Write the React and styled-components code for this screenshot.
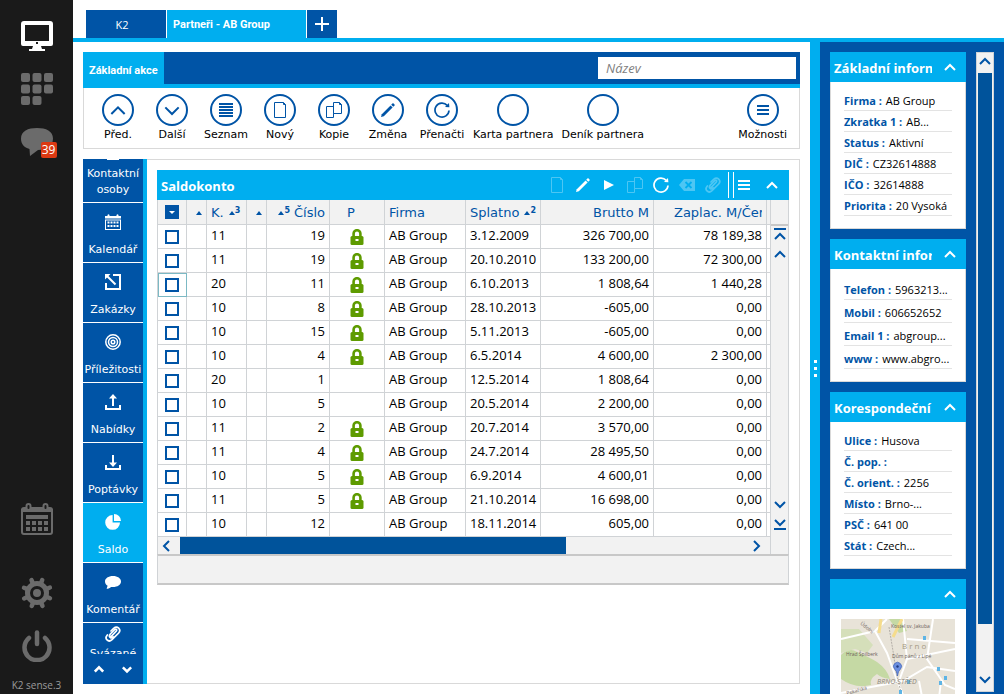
import styled, { createGlobalStyle, css } from 'styled-components';

const blue = '#0054a6';
const cyan = '#00aeef';
const line = '#d0d3d6';
const sans = "'Open Sans', 'Noto Sans', sans-serif";
const wide = "'DejaVu Sans', sans-serif";
const narrow = "Roboto, 'Open Sans', sans-serif";

const GlobalStyle = createGlobalStyle`
  * {
    box-sizing: border-box;
  }

  body {
    margin: 0;
    background: #fff;
    font-family: ${sans};
    font-size: 13px;
    color: #000;
    overflow: hidden;
  }

  button {
    border: 0;
    padding: 0;
    background: none;
    color: inherit;
    font: inherit;
    cursor: pointer;
  }

  svg {
    display: block;
    flex: none;
  }
`;

const Page = styled.div`
  display: flex;
  height: 100vh;
`;

/* ---------- left rail ---------- */

const Rail = styled.nav`
  display: flex;
  flex-direction: column;
  align-items: center;
  flex: none;
  width: 73px;
  padding: 20px 0 1px;
  background: #1a1a1a;
  color: #6b6b6b;
`;

const RailButton = styled.button`
  position: relative;
  height: 32px;
  margin-bottom: ${props => props.$gap || 21}px;
  color: ${props => (props.$active ? '#fff' : 'inherit')};
`;

const Badge = styled.span`
  position: absolute;
  right: -4px;
  bottom: 0;
  width: 16px;
  height: 16px;
  border-radius: 2px;
  background: #dc3912;
  color: #fff;
  font-size: 12px;
  line-height: 16px;
  text-align: center;
`;

const RailSpacer = styled.div`
  flex: 1;
`;

const Version = styled.span`
  color: #9a9a9a;
  font-size: 10px;
  line-height: 16px;
`;

/* ---------- frame ---------- */

const Main = styled.div`
  display: flex;
  flex-direction: column;
  flex: 1;
  min-width: 0;
`;

const Tabs = styled.div`
  display: flex;
  gap: 1px;
  padding: 10px 13px 0;
  border-bottom: 4px solid ${cyan};
`;

const Tab = styled.button`
  display: flex;
  align-items: center;
  justify-content: ${props => (props.$active ? 'flex-start' : 'center')};
  width: ${props => props.$width}px;
  height: 28px;
  padding: ${props => (props.$active ? '0 6px' : props.$closable ? '0 8px 0 0' : '0')};
  background: ${props => (props.$active ? cyan : blue)};
  color: #fff;
  font-family: ${props => (props.$active ? narrow : sans)};
  font-size: 11px;
  font-weight: ${props => (props.$active ? 700 : 400)};
  white-space: nowrap;
`;

const Body = styled.div`
  display: flex;
  flex: 1;
  min-height: 0;
`;

const Work = styled.main`
  display: flex;
  flex-direction: column;
  flex: 1;
  gap: 10px;
  min-width: 0;
  padding: 10px;
`;

const Splitter = styled.div`
  display: flex;
  flex-direction: column;
  align-items: center;
  justify-content: center;
  gap: 4px;
  flex: none;
  width: 10px;
  background: ${cyan};
`;

const Dot = styled.span`
  width: 3px;
  height: 3px;
  background: #fff;
`;

/* ---------- ribbon ---------- */

const Ribbon = styled.section`
  flex: none;
`;

const RibbonHead = styled.div`
  display: flex;
  justify-content: space-between;
  height: 36px;
  background: ${blue};
  border-bottom: 4px solid ${cyan};
`;

const RibbonTab = styled.button`
  height: 36px;
  padding: 0 6px;
  background: ${cyan};
  color: #fff;
  font-family: ${narrow};
  font-size: 11px;
  font-weight: 700;
  white-space: nowrap;
`;

const Search = styled.input`
  width: 198px;
  height: 22px;
  margin: 5px 4px 0 0;
  padding: 0 8px;
  border: 0;
  border-radius: 0;
  background: #fff;
  font-family: ${sans};
  font-size: 13px;
  font-style: italic;

  &::placeholder {
    color: #808080;
    opacity: 1;
  }
`;

const RibbonBody = styled.div`
  display: flex;
  height: 61px;
  padding: 6px 8px 0 7px;
  border: 1px solid #d9d9d9;
  border-top: 0;
`;

const Action = styled.button`
  display: flex;
  flex-direction: column;
  align-items: center;
  min-width: 54px;
  height: 50px;
  padding: 0 4px;
  margin-left: ${props => (props.$last ? 'auto' : '0')};
  font-family: ${wide};
  font-size: 11px;
  line-height: 18px;
  white-space: nowrap;
`;

const Circle = styled.span`
  display: flex;
  align-items: center;
  justify-content: center;
  width: 32px;
  height: 32px;
  border: 2px solid ${blue};
  border-radius: 50%;
  color: ${blue};
`;

/* ---------- content ---------- */

const Content = styled.section`
  display: flex;
  flex: 1;
  min-height: 0;
`;

const SideNav = styled.nav`
  display: flex;
  flex-direction: column;
  flex: none;
  width: 64px;
  border-right: 4px solid ${cyan};
  background: ${blue};
  color: #fff;
`;

const NavList = styled.div`
  flex: 1;
  min-height: 0;
  overflow: hidden;
`;

const NavItem = styled.button`
  display: flex;
  flex-direction: column;
  align-items: center;
  gap: 12px;
  width: 100%;
  height: 60px;
  padding: 11px 0 0;
  border-bottom: 1px solid #fff;
  background: ${props => (props.$active ? cyan : blue)};
  font-family: ${wide};
  font-size: 11px;
  line-height: 16px;
  overflow: hidden;

  ${props => props.$cut && css`
    justify-content: flex-end;
    gap: 6px;
    height: 44px;
    padding: 0 0 4px;
  `}

  ${props => props.$tight && css`
    gap: 4px;
    padding: 3px 0 0;
  `}
`;

const NavFoot = styled.div`
  display: flex;
  align-items: center;
  justify-content: center;
  gap: 18px;
  height: 30px;
`;

const Panel = styled.div`
  flex: 1;
  min-width: 0;
  padding: 10px;
  border: 1px solid #d9d9d9;
  border-left: 0;
`;

const GridHead = styled.div`
  display: flex;
  align-items: center;
  height: 30px;
  padding-left: 4px;
  background: ${cyan};
  color: #fff;
`;

const GridTitle = styled.h2`
  flex: 1;
  margin: 0;
  padding-top: 2px;
  font-size: 13px;
  font-weight: 700;
`;

const GridButton = styled.button`
  display: flex;
  align-items: center;
  justify-content: center;
  width: ${props => props.$width || 26}px;
  height: 30px;
  opacity: ${props => (props.disabled ? 0.3 : 1)};
`;

const Divider = styled.span`
  width: 6px;
  height: 26px;
  margin-left: 2px;
  border: 1px solid #fff;
  border-width: 0 1px;
`;

const GridBox = styled.div`
  display: flex;
  border: 1px solid ${line};
  border-width: 0 1px;
`;

const GridMain = styled.div`
  flex: 1;
  min-width: 0;
`;

const Table = styled.table`
  width: 100%;
  table-layout: fixed;
  border-collapse: separate;
  border-spacing: 0;
`;

const Th = styled.th`
  height: 25px;
  padding: ${props => props.$pad || '2px 4px 0'};
  border: 1px solid ${line};
  border-width: 0 1px 1px 0;
  background: #f2f2f2;
  color: ${blue};
  font-family: ${wide};
  font-size: 13px;
  font-weight: 400;
  line-height: 22px;
  text-align: ${props => props.$align || 'left'};
  white-space: nowrap;
`;

const Clip = styled.div`
  overflow: hidden;
`;

const HeadLabel = styled.span`
  display: flex;
  align-items: center;
  justify-content: ${props => props.$justify || 'flex-start'};
  gap: ${props => props.$gap || 0}px;
`;

const Order = styled.span`
  display: flex;
  align-items: center;
  height: 8px;
  font-weight: 700;
  line-height: 8px;

  small {
    padding-bottom: 5px;
    font-size: 8px;
  }
`;

const Td = styled.td`
  height: 24px;
  padding: 0 4px;
  border: 1px solid ${line};
  border-width: 0 1px 1px 0;
  line-height: 20px;
  text-align: ${props => props.$align || 'left'};
  vertical-align: top;
  white-space: nowrap;
  ${props => props.$focused && css`outline: 1px solid #7cb9c4; outline-offset: -1px;`}

  svg {
    margin: 4px auto 0;
  }
`;

const Check = styled.input`
  appearance: none;
  display: block;
  width: 14px;
  height: 14px;
  margin: 5px auto 0;
  border: 2px solid ${blue};
  background: #fff;
`;

const CheckMenu = styled.button`
  display: flex;
  align-items: center;
  justify-content: center;
  width: 14px;
  height: 14px;
  margin: 0 auto;
  background: ${blue};
  color: #fff;
`;

const HScroll = styled.div`
  display: flex;
  align-items: center;
  height: 17px;
  border-right: 1px solid ${line};
  background: #f2f2f2;
  color: ${blue};
`;

const HThumb = styled.div`
  width: 63%;
  height: 17px;
  background: #00539b;
`;

const HArrow = styled.button`
  display: flex;
  width: 22px;
  padding-left: 2px;
  margin-left: ${props => (props.$end ? 'auto' : '0')};
`;

const VScroll = styled.div`
  display: flex;
  flex-direction: column;
  align-items: center;
  flex: none;
  width: 17px;
  background: #f2f2f2;
  color: ${blue};
`;

const VHead = styled.div`
  width: 100%;
  height: 26px;
  border-bottom: 2px solid #c8c8c8;
`;

const VGroup = styled.div`
  display: flex;
  flex-direction: column;
  gap: 8px;
  padding: 2px 0;
`;

const VSpace = styled.div`
  flex: 1;
`;

const VCorner = styled.div`
  height: 22px;
`;

const GridFoot = styled.div`
  height: 31px;
  border: 1px solid ${line};
  border-width: 2px 1px;
  border-color: #c8c8c8 ${line};
  background: #f2f2f2;
`;

/* ---------- right side ---------- */

const Side = styled.aside`
  display: flex;
  gap: 10px;
  flex: none;
  width: 184px;
  padding: 10px 10px 0;
  background: ${blue};
`;

const Cards = styled.div`
  display: flex;
  flex-direction: column;
  gap: 10px;
  flex: 1;
  min-width: 0;
  overflow: hidden;
`;

const Card = styled.section`
  flex: none;
  background: #fff;
`;

const CardHead = styled.header`
  display: flex;
  align-items: center;
  height: 30px;
  padding-left: 4px;
  background: ${cyan};
  color: #fff;
`;

const CardTitle = styled.h2`
  flex: 1;
  margin: 0;
  padding-top: 2px;
  font-size: 13px;
  font-weight: 700;
  white-space: nowrap;
  overflow: hidden;
`;

const CardToggle = styled.button`
  display: flex;
  justify-content: flex-end;
  width: 34px;
  padding-right: 10px;
`;

const CardBody = styled.dl`
  margin: 0;
  padding: 8px 13px 12px;
  border: 1px solid #d9d9d9;
  border-top: 0;
`;

const Field = styled.div`
  display: flex;
  align-items: flex-end;
  gap: 4px;
  height: ${props => props.$height}px;
  border-bottom: 1px solid #e3e3e3;
  font-size: 11px;
  line-height: 18px;
  white-space: nowrap;

  dt {
    flex: none;
    color: ${blue};
    font-weight: 700;
  }

  dd {
    margin: 0;
  }
`;

const MapBox = styled.div`
  padding: 10px 11px;
`;

const SideScroll = styled.div`
  display: flex;
  flex-direction: column;
  flex: none;
  width: 18px;
  margin-bottom: 2px;
  border: 1px solid #d0d3d6;
  background: #f2f2f2;
  color: ${blue};
`;

const SideArrow = styled.button`
  display: flex;
  justify-content: center;
  height: 20px;
  padding-top: 2px;
`;

const SideThumb = styled.div`
  flex: 551;
  margin: 0 1px;
  background: #00539b;
`;

const SideRest = styled.div`
  flex: 47;
`;

/* ---------- icons ---------- */

const Chevron = ({ dir = 'up', size = 12, weight = 2 }) => {
  const paths = {
    up: 'M1 9 L6 4 L11 9',
    down: 'M1 4 L6 9 L11 4',
    left: 'M9 1 L4 6 L9 11',
    right: 'M4 1 L9 6 L4 11',
    first: 'M0 1 H12 M1 11 L6 6 L11 11',
    last: 'M0 11 H12 M1 2 L6 7 L11 2',
  };
  return (
    <svg width={size} height={size} viewBox="0 0 12 12" fill="none" stroke="currentColor" strokeWidth={weight}>
      <path d={paths[dir]} />
    </svg>
  );
};

const Bars = ({ count = 3, width = 12, gap = 4 }) => (
  <svg width={width} height={count * gap - gap + 2} fill="currentColor">
    {Array.from({ length: count }, (_, i) => (
      <rect key={i} y={i * gap} width={width} height="2" />
    ))}
  </svg>
);

const PageIcon = () => (
  <svg width="12" height="16" viewBox="0 0 12 16" fill="none" stroke="currentColor">
    <path d="M.5 .5 H9.500 L11.500 2.500 V15.500 H.5 Z M9.500 .5 V2.500 H11.500" />
  </svg>
);

const CopyIcon = ({ fill = '#fff' }) => (
  <svg width="16" height="16" viewBox="0 0 16 16" fill="none" stroke="currentColor">
    <path d="M.5 4.5 H7.5 V15.5 H.5 Z" />
    <path fill={fill} d="M7.5 .5 H13.500 L15.5 2.500 V11.5 H7.5 Z M13.500 .5 V2.500 H15.5" />
  </svg>
);

const PencilIcon = () => (
  <svg width="14" height="14" viewBox="0 0 14 14" fill="currentColor">
    <path d="M0 14 L.8 11.2 L9.600 2.400 L11.600 4.400 L2.800 13.2 Z" />
    <path d="M10.2 1.7 L11.4 .5 Q12 0 12.6 .5 L13.500 1.400 Q14 2 13.500 2.600 L12.300 3.800 Z" />
  </svg>
);

const ReloadIcon = () => (
  <svg width="16" height="16" viewBox="0 0 16 16" fill="none" stroke="currentColor" strokeWidth="1.7">
    <path d="M15 8.5 A7 7 0 1 1 13.200 3.400" />
    <path d="M11 5 L15.400 5.200 L15 1 Z" fill="currentColor" stroke="none" />
  </svg>
);

const PlayIcon = () => (
  <svg width="10" height="10" viewBox="0 0 10 10" fill="currentColor">
    <path d="M0 0 L10 5 L0 10 Z" />
  </svg>
);

const EraseIcon = () => (
  <svg width="16" height="12" viewBox="0 0 16 12">
    <path fill="currentColor" d="M5 0 H16 V12 H5 L0 6 Z" />
    <path stroke={cyan} strokeWidth="1.8" d="M6.5 3 L12.5 9 M12.5 3 L6.5 9" />
  </svg>
);

/* one long wire bent into a paper clip */
const ClipIcon = () => (
  <svg width="16" height="16" viewBox="0 0 24 24" fill="none" stroke="currentColor" strokeWidth="2.6" strokeLinecap="round">
    <path d="M9 16 L17 7.500 C18.500 5.500 16.500 3.800 14.800 5.200 L8 12 C4.500 16 9 19.500 12.500 16.500" />
    <path d="M9 7.500 L13 3.500 C18.500 -1 25 5 20.500 10.500 L10.500 20.500 C5 25.500 -1.500 19 3.500 13.500" />
  </svg>
);

const SmallCalendar = () => (
  <svg width="16" height="16" viewBox="0 0 16 16" fill="currentColor">
    <path d="M0 2 H2.5 V1 Q3.5 -.6 4.5 1 V2 H11.5 V1 Q12.5 -.6 13.5 1 V2 H16 V4.6 H0 Z" />
    <path d="M0 5.5 H16 V16 H0 Z M1 6.5 V15 H15 V6.5 Z" fillRule="evenodd" />
    <path d="M2.5 7.5h2v2h-2z M5.5 7.5h2v2h-2z M8.5 7.5h2v2h-2z M11.5 7.5h2v2h-2z M2.5 11h2v2h-2z M5.5 11h2v2h-2z M8.5 11h2v2h-2z M11.5 11h2v2h-2z" />
  </svg>
);

const OrdersIcon = () => (
  <svg width="16" height="16" viewBox="0 0 16 16" fill="none" stroke="currentColor" strokeWidth="2">
    <path d="M8 1 H15 V15 H1 V9" />
    <path d="M10.500 10.500 L2 2" />
    <path d="M0 0 H5.500 L0 5.500 Z" fill="currentColor" stroke="none" />
  </svg>
);

const TargetIcon = () => (
  <svg width="16" height="16" viewBox="0 0 16 16" fill="none" stroke="currentColor" strokeWidth="1.5">
    <circle cx="8" cy="8" r="7.2" />
    <circle cx="8" cy="8" r="4.5" />
    <circle cx="8" cy="8" r="1.8" />
  </svg>
);

const TrayIcon = ({ down }) => (
  <svg width="16" height="16" viewBox="0 0 16 16" fill="none" stroke="currentColor" strokeWidth="2">
    <path d="M1 11 V15 H15 V11" />
    <path d="M8 1 V12" />
    <path d={down ? 'M4 8.5 H12 L8 13 Z' : 'M4 4.5 H12 L8 0 Z'} fill="currentColor" stroke="none" />
  </svg>
);

const PieIcon = () => (
  <svg width="16" height="16" viewBox="0 0 16 16" fill="currentColor">
    <path d="M7.6 1 V8.4 H15 A7.4 7.4 0 1 1 7.6 1 Z" />
    <path d="M9 0 A7 7 0 0 1 16 7 H9 Z" />
  </svg>
);

const BubbleIcon = () => (
  <svg width="16" height="16" viewBox="0 0 16 16" fill="currentColor">
    <path d="M8 2 C12.6 2 16 4.4 16 7.5 C16 10.8 12.4 13 8 13 L6 12.9 C5 14 3.5 14.6 1.6 14.8 L2.6 11.8 C1 10.8 0 9.2 0 7.5 C0 4.4 3.4 2 8 2 Z" />
  </svg>
);

const PersonIcon = () => (
  <svg width="14" height="16" viewBox="0 0 14 16" fill="currentColor">
    <path d="M1 12 H13 V16 H1 Z" />
  </svg>
);

const LockIcon = () => (
  <svg width="14" height="16" viewBox="0 0 14 16">
    <path fill="none" stroke="#5e9b00" strokeWidth="2.6" d="M3.6 8 V4.6 A3.3 3.3 0 0 1 10.4 4.6 V8" />
    <rect y="7" x=".5" width="13" height="9" rx="1.5" fill="#5e9b00" />
    <rect x="5.5" y="10" width="3" height="2" fill="#fff" />
  </svg>
);

const Triangle = () => (
  <svg width="6" height="4" viewBox="0 0 6 4" fill="currentColor">
    <path d="M3 0 L6 4 H0 Z" />
  </svg>
);

const MonitorIcon = () => (
  <svg width="32" height="32" viewBox="0 0 32 32">
    <path fill="currentColor" fillRule="evenodd" d="M3 1 H29 Q32 1 32 4 V24 Q32 26 30 26 H2 Q0 26 0 24 V4 Q0 1 3 1 Z M4 5 V21 H28 V5 Z" />
    <rect x="15" y="22" width="2" height="2" fill="#1a1a1a" />
    <path fill="currentColor" d="M12 26 H20 L21 29 H24 V31 H8 V29 H11 Z" />
  </svg>
);

const AppsIcon = () => (
  <svg width="32" height="32" fill="currentColor">
    {[0, 1, 2, 3, 4, 5, 6, 7].map(i => (
      <rect key={i} x={(i % 3) * 11.5} y={Math.floor(i / 3) * 11.5} width="9" height="9" rx="2" />
    ))}
  </svg>
);

const ChatIcon = () => (
  <svg width="32" height="32" viewBox="0 0 32 32" fill="currentColor">
    <path d="M16 2 C25 2 32 5 32 12.5 C32 20 25 24 17 24 L9 30 L8.5 23 C3 21.500 0 18 0 12.500 C0 5 7 2 16 2 Z" />
  </svg>
);

const BigCalendar = () => (
  <svg width="32" height="32" viewBox="0 0 32 32" fill="none" stroke="currentColor">
    <path strokeWidth="2" d="M1 7 H31 V29 Q31 31 29 31 H3 Q1 31 1 29 Z" />
    <path fill="currentColor" stroke="none" d="M0 9 V7 Q0 4 3 4 H29 Q32 4 32 7 V9 Z" />
    <rect x="5.500" y="1" width="4" height="6" rx="2" strokeWidth="2" fill="#1a1a1a" />
    <rect x="22.500" y="1" width="4" height="6" rx="2" strokeWidth="2" fill="#1a1a1a" />
    <path strokeWidth="4" d="M5 14 H27" />
    <path strokeWidth="4" strokeDasharray="4 2" d="M5 20 H27 M5 26 H27" />
  </svg>
);

const GearIcon = () => (
  <svg width="32" height="32" viewBox="-16 -16 32 32" fill="none" stroke="currentColor">
    <circle r="9.500" strokeWidth="5" />
    <circle r="4" fill="currentColor" stroke="none" />
    {[22, 67, 112, 157, 202, 247, 292, 337].map(a => (
      <path key={a} d="M0 -11 V-14" strokeWidth="4.500" strokeLinecap="round" transform={`rotate(${a})`} />
    ))}
  </svg>
);

const PowerIcon = () => (
  <svg width="32" height="32" viewBox="0 0 32 32" fill="none" stroke="currentColor" strokeWidth="4.500" strokeLinecap="round">
    <path d="M8 8 A12.500 12.500 0 1 0 24 8" />
    <path d="M16 2.500 V14" />
  </svg>
);

const PlusIcon = () => (
  <svg width="14" height="14" stroke="currentColor" strokeWidth="2">
    <path d="M7 0 V14 M0 7 H14" />
  </svg>
);

const CityMap = () => (
  <svg width="114" height="114" viewBox="0 0 114 114" fontFamily="Open Sans, sans-serif">
    <rect width="114" height="114" fill="#e8e3d8" />
    <path fill="#c5d9a4" d="M0 36 Q8 28 16 33 Q28 38 36 43 Q46 50 49 60 Q40 59 36 55 Q28 60 30 66 Q14 70 0 60 Z" />
    <path fill="#d5dfba" d="M0 10 L18 10 L32 26 L26 34 L14 30 L0 34 Z" />
    <path fill="#c5d9a4" d="M48 0 H60 L66 12 L58 14 Z" />
    <g fill="none" stroke="#fff" strokeWidth="2">
      <path d="M0 20 L34 12 L46 0 M34 12 L46 34 L54 56 L62 76 L74 114 M62 0 L66 40 L58 62 M66 20 L114 24 M66 40 L114 30 M92 0 L86 40 L104 66 L114 70 M0 74 L30 68 L62 62 L86 48 L114 52 M0 88 L44 78 M78 62 L88 114 M100 62 L94 114 M62 84 L114 82" />
    </g>
    <path fill="none" stroke="#f5dc8c" strokeWidth="3" d="M40 0 L38 14 M61 0 L52 18" />
    <path fill="none" stroke="#b4afa8" strokeDasharray="2 1" d="M48 8 L52 32 L56 58 L62 80" />
    <g fill="#5db4e5">
      <path d="M82 17h3v4h-3z M96 48h3v4h-3z M103 57h3v4h-3z M66 61h3v4h-3z M58 71h3v4h-3z M98 62h3v4h-3z" />
    </g>
    <g fontSize="5" fill="#6d625b">
      <text x="50" y="9">Kostel sv. Jakuba</text>
      <text x="5" y="37">Hrad Špilberk</text>
      <text x="51" y="39">Dům pánů z Lipé</text>
      <text x="6" y="76" transform="rotate(-16 6 76)">Pekařská</text>
      <text x="19" y="5" transform="rotate(40 19 5)">Údolní</text>
    </g>
    <text x="61" y="30" fontSize="8" fill="#a59a84">B r n o</text>
    <text x="36" y="65" fontSize="7" fontStyle="italic" fill="#8f897c">BRNO-STŘED</text>
    <path fill="#6c8fe0" stroke="#3f62b5" strokeWidth=".7" d="M56.500 57 Q56 52 53.500 50 A4 4 0 1 1 59.500 50 Q57 52 56.500 57 Z" />
    <circle cx="56.500" cy="47.500" r="1.200" fill="#1f3a80" />
  </svg>
);

/* ---------- data ---------- */

const actions = [
  { label: 'Před.', icon: <Chevron size={16} weight={1.5} /> },
  { label: 'Další', icon: <Chevron dir="down" size={16} weight={1.5} /> },
  { label: 'Seznam', icon: <Bars count={5} width={14} gap={3} /> },
  { label: 'Nový', icon: <PageIcon /> },
  { label: 'Kopie', icon: <CopyIcon /> },
  { label: 'Změna', icon: <PencilIcon /> },
  { label: 'Přenačti', icon: <ReloadIcon /> },
  { label: 'Karta partnera' },
  { label: 'Deník partnera' },
  { label: 'Možnosti', icon: <Bars />, last: true },
];

const navItems = [
  { label: 'Kontaktní osoby', icon: <PersonIcon />, cut: true },
  { label: 'Kalendář', icon: <SmallCalendar /> },
  { label: 'Zakázky', icon: <OrdersIcon /> },
  { label: 'Příležitosti', icon: <TargetIcon /> },
  { label: 'Nabídky', icon: <TrayIcon /> },
  { label: 'Poptávky', icon: <TrayIcon down /> },
  { label: 'Saldo', icon: <PieIcon />, active: true },
  { label: 'Komentář', icon: <BubbleIcon /> },
  { label: 'Svázané', icon: <ClipIcon />, tight: true },
];

const rows = [
  { k: '11', number: '19', lock: true, due: '3.12.2009', gross: '326 700,00', paid: '78 189,38' },
  { k: '11', number: '19', lock: true, due: '20.10.2010', gross: '133 200,00', paid: '72 300,00' },
  { k: '20', number: '11', lock: true, due: '6.10.2013', gross: '1 808,64', paid: '1 440,28', focused: true },
  { k: '10', number: '8', lock: true, due: '28.10.2013', gross: '-605,00', paid: '0,00' },
  { k: '10', number: '15', lock: true, due: '5.11.2013', gross: '-605,00', paid: '0,00' },
  { k: '10', number: '4', lock: true, due: '6.5.2014', gross: '4 600,00', paid: '2 300,00' },
  { k: '20', number: '1', due: '12.5.2014', gross: '1 808,64', paid: '0,00' },
  { k: '10', number: '5', due: '20.5.2014', gross: '2 200,00', paid: '0,00' },
  { k: '11', number: '2', lock: true, due: '20.7.2014', gross: '3 570,00', paid: '0,00' },
  { k: '11', number: '4', lock: true, due: '24.7.2014', gross: '28 495,50', paid: '0,00' },
  { k: '10', number: '5', lock: true, due: '6.9.2014', gross: '4 600,01', paid: '0,00' },
  { k: '11', number: '5', lock: true, due: '21.10.2014', gross: '16 698,00', paid: '0,00' },
  { k: '10', number: '12', due: '18.11.2014', gross: '605,00', paid: '0,00' },
];

const cards = [
  {
    title: 'Základní informace',
    height: 21,
    fields: [
      ['Firma', 'AB Group'],
      ['Zkratka 1', 'AB...'],
      ['Status', 'Aktivní'],
      ['DIČ', 'CZ32614888'],
      ['IČO', '32614888'],
      ['Priorita', '20 Vysoká'],
    ],
  },
  {
    title: 'Kontaktní informace',
    height: 23,
    fields: [
      ['Telefon', '5963213...'],
      ['Mobil', '606652652'],
      ['Email 1', 'abgroup...'],
      ['www', 'www.abgro...'],
    ],
  },
  {
    title: 'Korespondeční adresa',
    height: 21,
    fields: [
      ['Ulice', 'Husova'],
      ['Č. pop.', ''],
      ['Č. orient.', '2256'],
      ['Místo', 'Brno-...'],
      ['PSČ', '641 00'],
      ['Stát', 'Czech...'],
    ],
  },
];

const columns = [29, 20, 40, 20, 63, 55, 81, 75, 113, null, 4];

/* ---------- components ---------- */

const SortMark = ({ order }) => (
  <Order>
    <Triangle />
    {order && <small>{order}</small>}
  </Order>
);

const SaldoGrid = () => (
  <Table>
    <colgroup>
      {columns.map((width, i) => (
        <col key={i} style={width ? { width } : undefined} />
      ))}
    </colgroup>
    <thead>
      <tr>
        <Th $pad="0 4px"><CheckMenu aria-label="Výběr"><svg width="6" height="3"><path fill="currentColor" d="M0 0 H6 L3 3 Z" /></svg></CheckMenu></Th>
        <Th><HeadLabel $justify="flex-end"><SortMark /></HeadLabel></Th>
        <Th><HeadLabel $gap={5}>K. <SortMark order="3" /></HeadLabel></Th>
        <Th><HeadLabel $justify="flex-end"><SortMark /></HeadLabel></Th>
        <Th><HeadLabel $gap={4} $justify="flex-end"><SortMark order="5" /> Číslo</HeadLabel></Th>
        <Th $pad="2px 16px 0 4px" $align="center">P</Th>
        <Th>Firma</Th>
        <Th><HeadLabel $gap={5}>Splatno <SortMark order="2" /></HeadLabel></Th>
        <Th $align="right">Brutto M</Th>
        <Th $pad="2px 4px 0 20px"><Clip>Zaplac. M/Čerp.</Clip></Th>
        <Th $pad="0" />
      </tr>
    </thead>
    <tbody>
      {rows.map((row, i) => (
        <tr key={i}>
          <Td $focused={row.focused}><Check type="checkbox" aria-label={`Řádek ${i + 1}`} /></Td>
          <Td />
          <Td>{row.k}</Td>
          <Td />
          <Td $align="right">{row.number}</Td>
          <Td>{row.lock && <LockIcon />}</Td>
          <Td>AB Group</Td>
          <Td>{row.due}</Td>
          <Td $align="right">{row.gross}</Td>
          <Td $align="right">{row.paid}</Td>
          <Td />
        </tr>
      ))}
    </tbody>
  </Table>
);

const App = () => {
  return (
    <Page>
      <GlobalStyle />
      <Rail>
        <RailButton $active aria-label="Plocha"><MonitorIcon /></RailButton>
        <RailButton aria-label="Aplikace"><AppsIcon /></RailButton>
        <RailButton aria-label="Zprávy"><ChatIcon /><Badge>39</Badge></RailButton>
        <RailSpacer />
        <RailButton $gap={42} aria-label="Kalendář"><BigCalendar /></RailButton>
        <RailButton aria-label="Nastavení"><GearIcon /></RailButton>
        <RailButton $gap={15} aria-label="Odhlásit"><PowerIcon /></RailButton>
        <Version>K2 sense.3</Version>
      </Rail>

      <Main>
        <Tabs>
          <Tab $width={80} $closable>K2</Tab>
          <Tab $width={139} $active>Partneři - AB Group</Tab>
          <Tab $width={30} aria-label="Nová záložka"><PlusIcon /></Tab>
        </Tabs>

        <Body>
          <Work>
            <Ribbon>
              <RibbonHead>
                <RibbonTab>Základní akce</RibbonTab>
                <Search placeholder="Název" aria-label="Název" />
              </RibbonHead>
              <RibbonBody>
                {actions.map(action => (
                  <Action key={action.label} $last={action.last}>
                    <Circle>{action.icon}</Circle>
                    {action.label}
                  </Action>
                ))}
              </RibbonBody>
            </Ribbon>

            <Content>
              <SideNav>
                <NavList>
                  {navItems.map(item => (
                    <NavItem key={item.label} $active={item.active} $cut={item.cut} $tight={item.tight}>
                      {item.icon}
                      <span>{item.label}</span>
                    </NavItem>
                  ))}
                </NavList>
                <NavFoot>
                  <button aria-label="Nahoru"><Chevron weight={3} size={10} /></button>
                  <button aria-label="Dolů"><Chevron dir="down" weight={3} size={10} /></button>
                </NavFoot>
              </SideNav>

              <Panel>
                <GridHead>
                  <GridTitle>Saldokonto</GridTitle>
                  <GridButton disabled aria-label="Nový"><PageIcon /></GridButton>
                  <GridButton aria-label="Změna"><PencilIcon /></GridButton>
                  <GridButton aria-label="Spustit"><PlayIcon /></GridButton>
                  <GridButton disabled aria-label="Kopie"><CopyIcon fill={cyan} /></GridButton>
                  <GridButton aria-label="Přenačti"><ReloadIcon /></GridButton>
                  <GridButton disabled aria-label="Smazat"><EraseIcon /></GridButton>
                  <GridButton disabled aria-label="Přílohy"><ClipIcon /></GridButton>
                  <Divider />
                  <GridButton $width={20} aria-label="Možnosti"><Bars /></GridButton>
                  <GridButton $width={35} aria-label="Sbalit"><Chevron /></GridButton>
                </GridHead>
                <GridBox>
                  <GridMain>
                    <SaldoGrid />
                    <HScroll>
                      <HArrow aria-label="Vlevo"><Chevron dir="left" /></HArrow>
                      <HThumb />
                      <HArrow $end aria-label="Vpravo"><Chevron dir="right" /></HArrow>
                    </HScroll>
                  </GridMain>
                  <VScroll>
                    <VHead />
                    <VGroup>
                      <button aria-label="Na začátek"><Chevron dir="first" /></button>
                      <button aria-label="O řádek výš"><Chevron /></button>
                    </VGroup>
                    <VSpace />
                    <VGroup>
                      <button aria-label="O řádek níž"><Chevron dir="down" /></button>
                      <button aria-label="Na konec"><Chevron dir="last" /></button>
                    </VGroup>
                    <VCorner />
                  </VScroll>
                </GridBox>
                <GridFoot />
              </Panel>
            </Content>
          </Work>

          <Splitter>
            <Dot />
            <Dot />
            <Dot />
          </Splitter>

          <Side>
            <Cards>
              {cards.map(card => (
                <Card key={card.title}>
                  <CardHead>
                    <CardTitle>{card.title}</CardTitle>
                    <CardToggle aria-label="Sbalit"><Chevron /></CardToggle>
                  </CardHead>
                  <CardBody>
                    {card.fields.map(([name, value]) => (
                      <Field key={name} $height={card.height}>
                        <dt>{name} :</dt>
                        <dd>{value}</dd>
                      </Field>
                    ))}
                  </CardBody>
                </Card>
              ))}
              <Card>
                <CardHead>
                  <CardTitle />
                  <CardToggle aria-label="Sbalit"><Chevron /></CardToggle>
                </CardHead>
                <MapBox><CityMap /></MapBox>
              </Card>
            </Cards>
            <SideScroll>
              <SideArrow aria-label="Nahoru"><Chevron /></SideArrow>
              <SideThumb />
              <SideRest />
              <SideArrow aria-label="Dolů"><Chevron dir="down" /></SideArrow>
            </SideScroll>
          </Side>
        </Body>
      </Main>
    </Page>
  );
};

export default App;
